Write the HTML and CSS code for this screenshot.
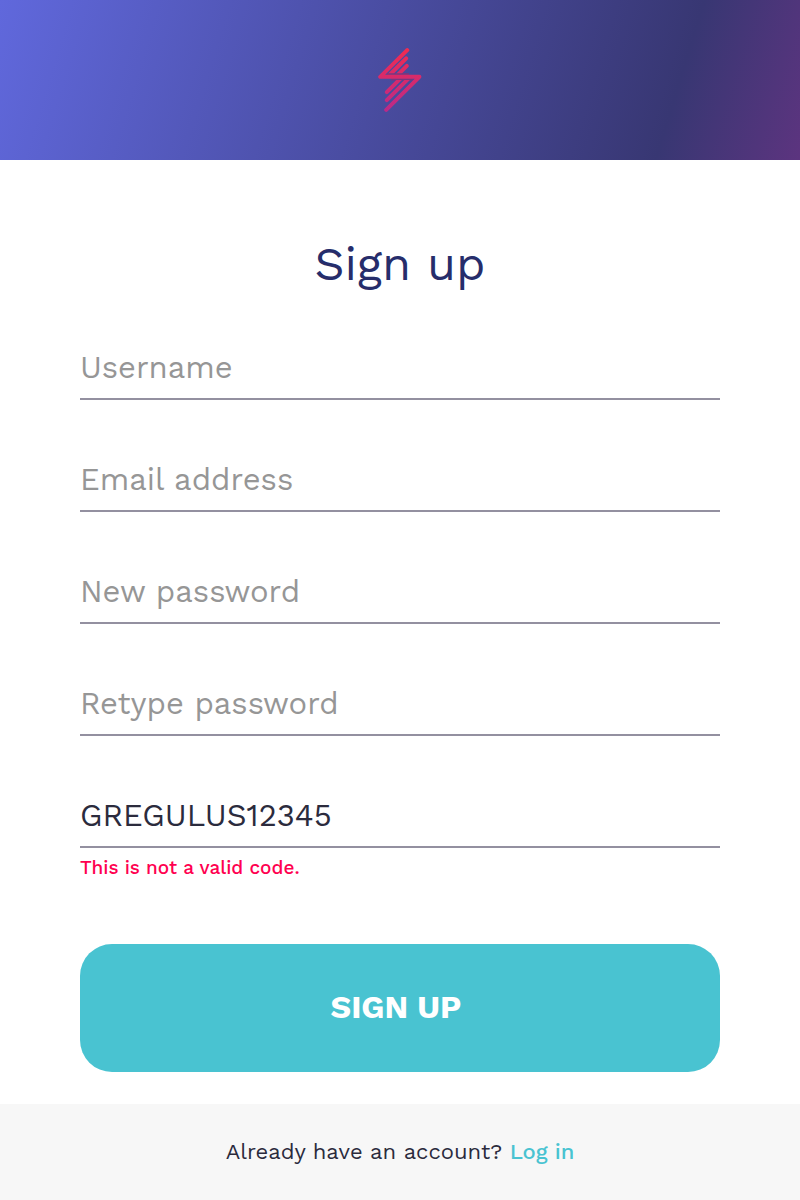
FILE: index.html
```html
<!DOCTYPE html>
<html lang="en">
<head>
<meta charset="utf-8">
<meta name="viewport" content="width=device-width, initial-scale=1">
<title>Sign up</title>
<link rel="stylesheet" href="styles.css">
</head>
<body>
<header class="banner">
  <svg class="logo" viewBox="0 0 44 64" role="img" aria-label="Logo" fill="none" stroke="url(#bolt)" stroke-width="4" stroke-linecap="round" stroke-linejoin="round">
    <defs>
      <linearGradient id="bolt" gradientUnits="userSpaceOnUse" x1="0" y1="0" x2="0" y2="64">
        <stop offset="0" stop-color="#f22b50"/>
        <stop offset="1" stop-color="#b82a8a"/>
      </linearGradient>
      <clipPath id="rays"><path d="M0 0H44V25.3H0ZM0 32H44V64H0Z"/></clipPath>
    </defs>
    <path d="M9 26H31M13 31.5H35" stroke="#8c2f72" stroke-width="2" stroke-linecap="butt" opacity=".7"/>
    <path clip-path="url(#rays)" d="M28.2 10.3 11 27.5M28.8 17.8 19 27.6M24 29.2 8.8 44.2M32 29.2 8.8 52.2"/>
    <path d="M29.2 2.2 2.2 28.8H41.4L8.2 61.8"/>
  </svg>
</header>
<main class="content">
  <h1 class="title">Sign up</h1>
  <form class="form">
    <div class="field"><input class="input" type="text" placeholder="Username" aria-label="Username"></div>
    <div class="field"><input class="input" type="email" placeholder="Email address" aria-label="Email address"></div>
    <div class="field"><input class="input" type="password" placeholder="New password" aria-label="New password"></div>
    <div class="field"><input class="input" type="password" placeholder="Retype password" aria-label="Retype password"></div>
    <div class="field">
      <input class="input" type="text" value="GREGULUS12345" aria-label="Code" aria-invalid="true" aria-describedby="code-error">
      <p class="error" id="code-error">This is not a valid code.</p>
    </div>
    <button class="submit" type="submit">SIGN UP</button>
  </form>
</main>
<footer class="footer">
  <p class="prompt">Already have an account? <a class="link" href="#login">Log in</a></p>
</footer>
</body>
</html>
```
FILE: styles.css
```css
* { box-sizing: border-box; }

body {
  display: flex;
  flex-direction: column;
  min-height: 100vh;
  margin: 0;
  background: #fff;
  color: #2b2b3d;
  font-family: "Work Sans", Inter, "Open Sans", sans-serif;
}

.banner {
  display: flex;
  justify-content: center;
  padding: 48px;
  background: linear-gradient(107deg, #6068dc 0%, #383773 83%, #5c347f 100%);
}

.logo { width: 44px; height: 64px; }

.content { flex: 1; padding: 72px 80px 32px; }

.title {
  margin: 0 0 40px;
  color: #262d6b;
  font-size: 47px;
  font-weight: 400;
  line-height: 64px;
  text-align: center;
}

.form { display: flex; flex-direction: column; }

.field { margin-bottom: 48px; }

.input {
  display: block;
  width: 100%;
  height: 64px;
  padding: 0;
  border: 0;
  border-bottom: 2px solid #9390a0;
  border-radius: 0;
  outline: 0;
  background: transparent;
  color: #2b2b3d;
  font: inherit;
  font-size: 31px;
}

.input::placeholder { color: #969696; opacity: 1; }

.error {
  margin: 8px 0 0;
  color: #ff0050;
  font-size: 19px;
  font-weight: 500;
  line-height: 24px;
}

.submit {
  height: 128px;
  margin-top: 16px;
  padding: 0 8px 2px 0;
  border: 0;
  border-radius: 32px;
  background: #49c3d1;
  color: #fff;
  font: inherit;
  font-size: 32px;
  font-weight: 700;
}

.footer {
  padding: 32px;
  background: #f7f7f7;
  font-size: 22px;
  line-height: 32px;
  text-align: center;
}

.prompt { margin: 0; }

.link { color: #49c3d1; font-weight: 500; text-decoration: none; }
```
